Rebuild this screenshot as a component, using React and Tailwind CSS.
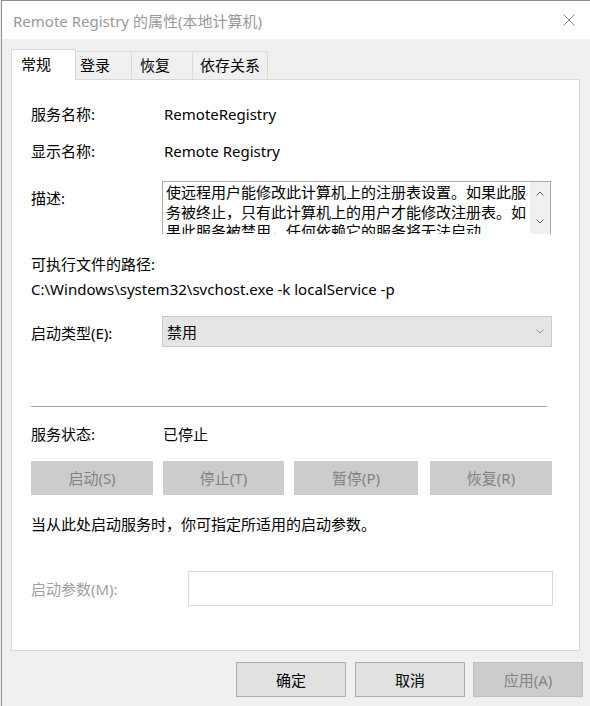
import React from "react";

const tabs = [
  { label: "常规", active: true, w: "w-[65px]", pl: "pl-[9px]" },
  { label: "登录", w: "w-[56px]", pl: "pl-[4px]" },
  { label: "恢复", w: "w-[61px]", pl: "pl-[8px]" },
  { label: "依存关系", w: "w-[75px]", pl: "pl-[7px]" },
];

function CloseIcon() {
  return (
    <svg width="12" height="12" viewBox="0 0 12 12" className="block">
      <path d="M0.5 0.5 L11.5 11.5 M11.5 0.5 L0.5 11.5" stroke="#8a8a8a" strokeWidth="1" fill="none" />
    </svg>
  );
}

function Chevron({ up = false, color = "#606060" }) {
  return (
    <svg width="8" height="5" viewBox="0 0 8 5" className="block">
      <path d={up ? "M0.5 4.5 L4 1 L7.5 4.5" : "M0.5 0.5 L4 4 L7.5 0.5"} stroke={color} strokeWidth="1" fill="none" />
    </svg>
  );
}

function ServiceButton({ children, className }) {
  return (
    <div
      className={`h-[34px] flex items-center justify-center bg-[#cccccc] text-[#838383] ${className}`}
    >
      {children}
    </div>
  );
}

export default function App() {
  return (
    <div className="w-[590px] h-[706px] overflow-hidden flex bg-[#eeeeee] text-[15px] text-black font-['Noto_Sans','Noto_Sans_CJK_SC',sans-serif] leading-[20px]">
      {/* strip of the desktop behind the window */}
      <div className="w-px shrink-0 bg-[#ececec]" />
      <div className="w-[589px] shrink-0 flex flex-col border-l border-t border-[#8f8f8f] bg-white">
        {/* title bar */}
        <div className="h-[38px] shrink-0 flex items-center justify-between pl-[11px] pr-[15px] bg-white">
          <span className="text-[#999999] pt-[1px]">Remote Registry 的属性(本地计算机)</span>
          <CloseIcon />
        </div>

        {/* dialog body */}
        <div className="flex-1 flex flex-col bg-[#f0f0f0] pl-[9px]">
          {/* tab strip */}
          <div className="mt-[10px] flex items-end">
            {tabs.map((t) =>
              t.active ? (
                <div
                  key={t.label}
                  className={`relative z-10 -mb-px h-[31px] ${t.w} ${t.pl} bg-white border-l border-t border-r border-[#d9d9d9] flex items-center`}
                >
                  <span className="-mt-[3px]">{t.label}</span>
                </div>
              ) : (
                <div
                  key={t.label}
                  className={`h-[28px] ${t.w} ${t.pl} border-t border-r border-[#d9d9d9] flex items-center`}
                >
                  <span className="-mt-[1px]">{t.label}</span>
                </div>
              )
            )}
          </div>

          {/* property page */}
          <div className="w-[569px] h-[572px] shrink-0 bg-white border border-[#d9d9d9] flex flex-col pl-[19px]">
            <div className="mt-[24px] flex">
              <span className="w-[133px]">服务名称:</span>
              <span>RemoteRegistry</span>
            </div>
            <div className="mt-[17px] flex">
              <span className="w-[133px]">显示名称:</span>
              <span>Remote Registry</span>
            </div>

            <div className="mt-[20px] flex items-start">
              <span className="w-[131px] mt-[7px]">描述:</span>
              <div className="w-[389px] h-[53px] flex border-l border-t border-r border-[#ababab] overflow-hidden">
                <div className="w-[367px] pl-[3px] h-[53px] overflow-hidden leading-[19.5px] pt-[1px]">
                  使远程用户能修改此计算机上的注册表设置。如果此服务被终止，只有此计算机上的用户才能修改注册表。如果此服务被禁用，任何依赖它的服务将无法启动。
                </div>
                <div className="w-[20px] h-[52px] bg-[#f0f0f0] flex flex-col items-center justify-between pt-[9px] pb-[10px]">
                  <Chevron up />
                  <Chevron />
                </div>
              </div>
            </div>

            <div className="mt-[20px]">可执行文件的路径:</div>
            <div className="mt-[5px]">C:\Windows\system32\svchost.exe -k localService -p</div>

            <div className="mt-[17px] flex items-center">
              <span className="w-[131px] mt-[2px]">启动类型(E):</span>
              <div className="w-[390px] h-[31px] bg-[#e5e5e5] border border-[#cccccc] flex items-center justify-between pl-[4px] pr-[7px]">
                <span>禁用</span>
                <Chevron color="#8a8a8a" />
              </div>
            </div>

            <div className="mt-[59px] h-px w-[516px] bg-[#a0a0a0]" />

            <div className="mt-[17px] flex">
              <span className="w-[132px]">服务状态:</span>
              <span>已停止</span>
            </div>

            <div className="mt-[17px] flex">
              <ServiceButton className="w-[122px]">启动(S)</ServiceButton>
              <ServiceButton className="w-[121px] ml-[10px]">停止(T)</ServiceButton>
              <ServiceButton className="w-[124px] ml-[10px]">暂停(P)</ServiceButton>
              <ServiceButton className="w-[122px] ml-[12px]">恢复(R)</ServiceButton>
            </div>

            <div className="mt-[19px]">当从此处启动服务时，你可指定所适用的启动参数。</div>

            <div className="mt-[37px] flex items-center">
              <span className="w-[157px] text-[#a0a0a0]">启动参数(M):</span>
              <div className="w-[365px] h-[35px] bg-white border border-[#d9d9d9]" />
            </div>
          </div>

          {/* dialog buttons */}
          <div className="mt-[11px] flex">
            <div className="ml-[225px] w-[110px] h-[35px] bg-[#e1e1e1] border border-[#adadad] flex items-center justify-center">
              确定
            </div>
            <div className="ml-[9px] w-[110px] h-[35px] bg-[#e1e1e1] border border-[#adadad] flex items-center justify-center">
              取消
            </div>
            <div className="ml-[8px] w-[110px] h-[35px] bg-[#cccccc] border border-[#bfbfbf] text-[#838383] flex items-center justify-center">
              应用(A)
            </div>
          </div>
        </div>
      </div>
    </div>
  );
}
